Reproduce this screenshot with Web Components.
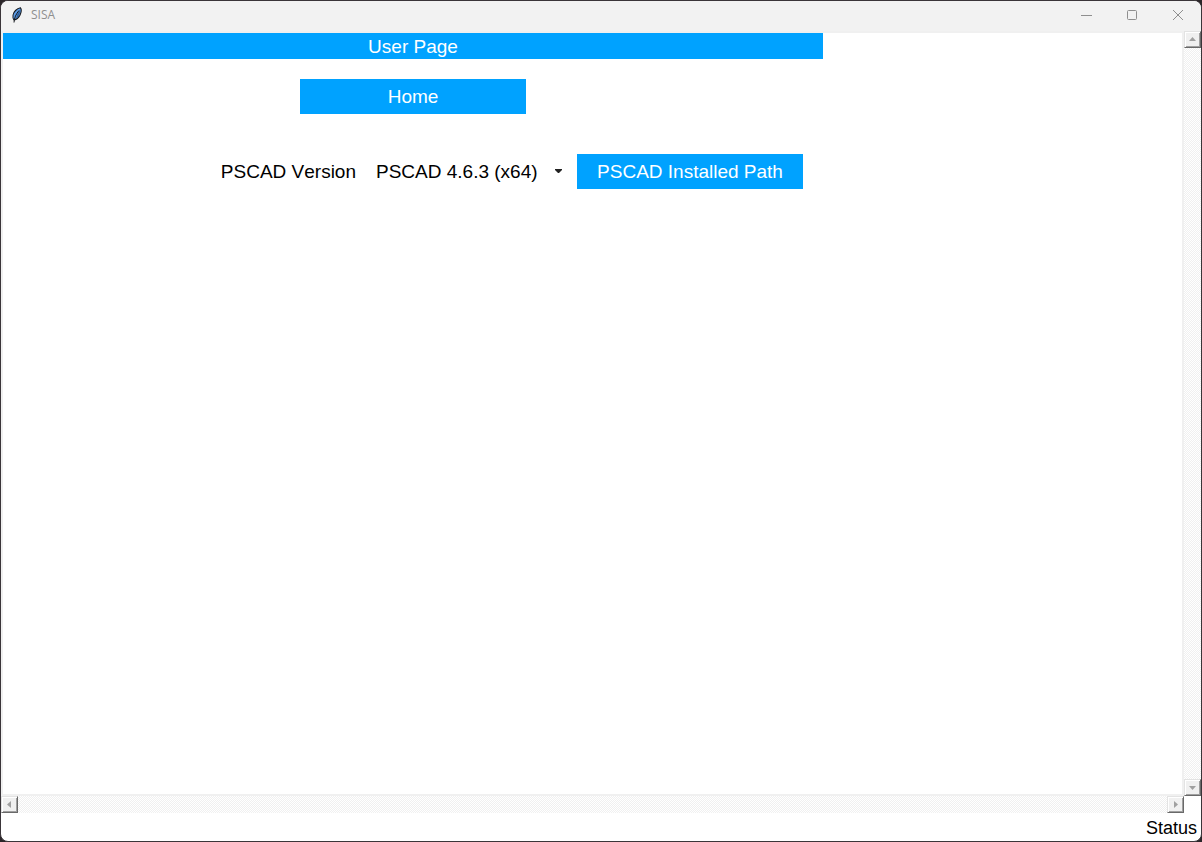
<!DOCTYPE html>
<html lang="en">
<head>
<meta charset="utf-8">
<title>SISA</title>
<style>
  html, body { margin: 0; height: 100%; }
  body {
    background: #2b2629;
    font-family: "Liberation Sans", Arial, sans-serif;
    font-size: 19px;
    line-height: 22px;
    font-kerning: none;
    color: #000;
  }
</style>
</head>
<body>
<app-window heading="SISA">
  <user-page>
    <page-banner>User Page</page-banner>
    <tk-button class="home">Home</tk-button>
    <form-row>
      <version-picker></version-picker>
      <tk-button>PSCAD Installed Path</tk-button>
    </form-row>
  </user-page>
  <status-bar slot="status">Status</status-bar>
</app-window>

<script>
  const define = (name, html, setup) => {
    const template = document.createElement('template');
    template.innerHTML = html;
    customElements.define(name, class extends HTMLElement {
      constructor() {
        super();
        this.attachShadow({ mode: 'open' }).append(template.content.cloneNode(true));
      }
      connectedCallback() {
        if (setup) setup(this, this.shadowRoot);
      }
    });
  };

  define('title-bar', `
    <style>
      :host { display: flex; align-items: center; height: 28px; padding-bottom: 2px; background: #f2f2f2; color: #8f8f8f; }
      .logo { width: 12px; height: 16px; margin-left: 10px; }
      .name { flex: 1; margin-left: 8px; font: 12px/16px "Open Sans", "Noto Sans", sans-serif; }
      .buttons { display: flex; }
      button { display: grid; place-items: center; width: 46px; height: 28px; padding: 0; border: 0; background: none; color: inherit; }
      button svg { width: 12px; height: 12px; fill: none; stroke: currentColor; }
    </style>
    <svg class="logo" viewBox="0 0 12 16" aria-hidden="true">
      <path d="M3 13C1 10 2 6 4.500 3.500C6 2 8 1 9.500 .8C10.800 2.500 10 6 8.800 8.500C7.500 11 5.500 12.500 3 13Z" fill="#5b9be6" stroke="#15181d" stroke-width="1.100"/>
      <path d="M5 11.500C7.500 10 9.500 6 9.500 2.500L6.500 6.500Z" fill="#2c5f9e"/>
      <path d="M3 15.500C3.200 11 5 7 8 3.500" fill="none" stroke="#15181d" stroke-width="1"/>
    </svg>
    <span class="name"></span>
    <div class="buttons">
      <button type="button" aria-label="Minimize"><svg viewBox="0 0 12 12"><path d="M1 6.500H12"/></svg></button>
      <button type="button" aria-label="Maximize"><svg viewBox="0 0 12 12"><rect x="1.500" y="1.500" width="9" height="9" rx="1"/></svg></button>
      <button type="button" aria-label="Close"><svg viewBox="0 0 12 12"><path d="M1 1L11 11M11 1L1 11"/></svg></button>
    </div>
  `);

  define('scroll-track', `
    <style>
      :host {
        display: flex; justify-content: space-between;
        background: repeating-conic-gradient(#fff 0 25%, #f0f0f0 0 50%) 0 0 / 2px 2px;
      }
      :host([vertical]) { flex-direction: column; }
      button {
        box-sizing: border-box; width: 17px; height: 17px; padding: 0;
        display: grid; place-items: center; background: #f0f0f0;
        border: 1px solid; border-color: #e3e3e3 #696969 #696969 #e3e3e3;
        box-shadow: inset 1px 1px #fff, inset -1px -1px #a0a0a0;
      }
      svg { width: 7px; height: 7px; fill: #a0a0a0; }
      :host([vertical]) svg { transform: rotate(90deg); }
      .end svg { transform: rotate(180deg); }
      :host([vertical]) .end svg { transform: rotate(270deg); }
    </style>
    <button type="button" class="start" aria-label="Scroll back"><svg viewBox="0 0 7 7"><path d="M1 3.500L5 0V7Z"/></svg></button>
    <button type="button" class="end" aria-label="Scroll forward"><svg viewBox="0 0 7 7"><path d="M1 3.500L5 0V7Z"/></svg></button>
  `);

  define('app-window', `
    <style>
      :host {
        box-sizing: border-box; display: grid; min-height: 100vh;
        grid-template: auto 1fr auto auto / 1fr auto;
        border: 1px solid #3a3539; border-radius: 8px; overflow: hidden; background: #fff;
      }
      title-bar, .status { grid-column: 1 / -1; }
      .view { border: 2px solid #f0f0f0; min-width: 0; overflow: hidden; }
    </style>
    <title-bar></title-bar>
    <div class="view"><slot></slot></div>
    <scroll-track vertical></scroll-track>
    <scroll-track></scroll-track>
    <div class="status"><slot name="status"></slot></div>
  `, (host, root) => {
    const bar = root.querySelector('title-bar');
    bar.shadowRoot.querySelector('.name').textContent = host.getAttribute('heading');
  });

  define('user-page', `
    <style>
      :host { display: flex; flex-direction: column; align-items: center; max-width: 820px; }
      ::slotted(page-banner), ::slotted(form-row) { align-self: stretch; }
      ::slotted(.home) { margin: 20px 0 40px; }
    </style>
    <slot></slot>
  `);

  define('page-banner', `
    <style>
      :host { display: block; background: #00a2ff; color: #fff; text-align: center; }
      h1 { margin: 0; padding: 3px 0 1px; font: inherit; }
    </style>
    <h1><slot></slot></h1>
  `);

  define('tk-button', `
    <style>
      :host { display: block; }
      button { width: 226px; height: 35px; padding: 0; border: 0; background: #00a2ff; color: #fff; font: inherit; font-kerning: inherit; }
    </style>
    <button type="button"><slot></slot></button>
  `);

  define('form-row', `
    <style>
      :host { display: flex; justify-content: flex-end; align-items: center; padding-right: 20px; }
    </style>
    <slot></slot>
  `);

  define('version-picker', `
    <style>
      :host { display: flex; align-items: center; gap: 20px; }
      .field { display: grid; align-items: center; }
      select, svg { grid-area: 1 / 1; }
      select { appearance: none; width: 201px; height: 35px; padding: 0; border: 0; border-radius: 0; background: #fff; color: inherit; font: inherit; font-kerning: none; }
      svg { justify-self: end; width: 7px; height: 5px; margin-right: 15px; fill: #222; pointer-events: none; }
    </style>
    <label for="version">PSCAD Version</label>
    <div class="field">
      <select id="version"><option>PSCAD 4.6.3 (x64)</option></select>
      <svg viewBox="0 0 7 5" aria-hidden="true"><path d="M0 0H7V1L4 4H3L0 1Z"/></svg>
    </div>
  `);

  define('status-bar', `
    <style>
      :host { display: block; padding: 4px 4px 2px; text-align: right; font-size: 18px; }
    </style>
    <slot></slot>
  `);
</script>
</body>
</html>
